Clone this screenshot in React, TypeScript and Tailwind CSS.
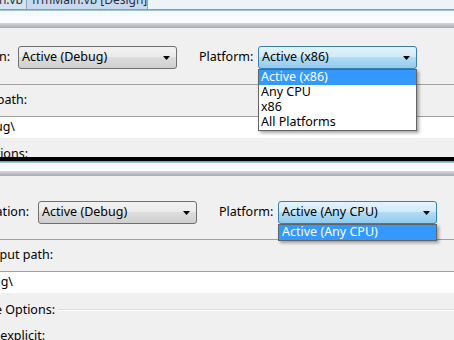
import React from "react";

function Arrow() {
  return (
    <svg width="7" height="4" viewBox="0 0 7 4" className="shrink-0">
      <path d="M0 0 H7 L3.5 4 Z" fill="#000" />
    </svg>
  );
}

function Combo({ text, focused }: { text: string; focused?: boolean }) {
  return (
    <div
      className={
        "w-[159px] h-[23px] rounded-[3px] border flex items-center justify-between pl-[3px] pr-[6px] " +
        (focused
          ? "border-[#3c7fb1] bg-[linear-gradient(#e3f3fc_0%,#d2ecfa_45%,#b2dcf5_50%,#90cbee_100%)]"
          : "border-[#707070] bg-[linear-gradient(#f2f2f2_0%,#ebebeb_45%,#dddddd_50%,#cfcfcf_100%)]")
      }
    >
      <span className="whitespace-nowrap leading-none">{text}</span>
      <Arrow />
    </div>
  );
}

function Label({ text, w }: { text: string; w: number }) {
  return (
    <div
      className="flex justify-end overflow-hidden whitespace-nowrap shrink-0"
      style={{ width: w }}
    >
      <span>{text}</span>
    </div>
  );
}

function HeaderBands({ top }: { top?: boolean }) {
  return (
    <div className="flex flex-col shrink-0">
      <div className="h-[1px] bg-[#7f9db9]" />
      <div className="h-[1px] bg-[#9fc3d0]" />
      <div className={(top ? "h-[12px]" : "h-[8px]") + " bg-[linear-gradient(#f4f8fb,#fbfcfd)]"} />
      <div className="h-[5px] bg-[linear-gradient(#d8d8de,#a9a9b2)]" />
    </div>
  );
}

export default function App() {
  return (
    <div className="w-[454px] h-[340px] overflow-hidden bg-[#f0f0f0] flex flex-col text-[12.5px] text-black font-['Noto_Sans',sans-serif]">
      {/* ---------- TOP SCREENSHOT ---------- */}
      <div className="h-[157px] flex flex-col shrink-0">
        {/* tab strip */}
        <div className="h-[9px] flex bg-[#eef3f8] overflow-hidden shrink-0 text-[12px]">
          <div className="w-[27px] bg-[#d6e2ef] border-r border-[#8ea6c0] flex justify-end overflow-hidden">
            <span className="-mt-[9px] pr-[3px] text-[#1e2f45] whitespace-nowrap">frmMain.vb</span>
          </div>
          <div className="w-[121px] bg-[#c9d9ec] border-r border-[#8ea6c0] overflow-hidden pl-[5px]">
            <span className="block -mt-[9px] text-[#1e2f45] whitespace-nowrap">frmMain.vb [Design]</span>
          </div>
        </div>
        <HeaderBands top />
        {/* panel */}
        <div className="flex-1 flex flex-col">
          <div className="h-[56px] pt-[18px] flex items-start shrink-0">
            <div className="h-[23px] flex items-center">
              <Label text="Configuration:" w={10} />
            </div>
            <div className="ml-[8px]">
              <Combo text="Active (Debug)" />
            </div>
            <div className="ml-[22px] w-[59px] h-[23px] flex items-center">Platform:</div>
            <div className="relative">
              <Combo text="Active (x86)" focused />
              <div className="absolute left-0 top-[23px] w-[159px] bg-white border border-[#646464] shadow-[2px_2px_3px_rgba(0,0,0,0.35)] flex flex-col z-10">
                <div className="h-[15px] bg-[#3399ff] text-white pl-[2px] flex items-center leading-none">Active (x86)</div>
                <div className="h-[15px] pl-[2px] flex items-center leading-none">Any CPU</div>
                <div className="h-[15px] pl-[2px] flex items-center leading-none">x86</div>
                <div className="h-[15px] pl-[2px] flex items-center leading-none">All Platforms</div>
              </div>
            </div>
          </div>
          <div className="h-[1px] bg-[#a0a0a0] shrink-0" />
          <div className="h-[31px] flex items-center shrink-0">
            <Label text="Build output path:" w={27} />
          </div>
          <div className="h-[1px] bg-[#a0a0a0] shrink-0" />
          <div className="h-[21px] bg-white flex items-center shrink-0">
            <Label text="bin\Debug\" w={15} />
          </div>
          <div className="flex-1 flex items-end overflow-hidden">
            <div className="-mb-[7px]">
              <Label text="Compile Options:" w={28} />
            </div>
          </div>
        </div>
      </div>

      {/* black divider */}
      <div className="h-[4px] bg-black shrink-0" />

      {/* ---------- BOTTOM SCREENSHOT ---------- */}
      <div className="flex-1 flex flex-col">
        <HeaderBands />
        <div className="h-[63px] pt-[25px] flex items-start shrink-0">
          <div className="h-[23px] flex items-center">
            <Label text="Configuration:" w={29} />
          </div>
          <div className="ml-[9px]">
            <Combo text="Active (Debug)" />
          </div>
          <div className="ml-[22px] w-[59px] h-[23px] flex items-center">Platform:</div>
          <div className="relative">
            <Combo text="Active (Any CPU)" focused />
            <div className="absolute left-0 top-[23px] w-[159px] bg-white border border-[#646464] shadow-[2px_2px_3px_rgba(0,0,0,0.35)] flex flex-col z-10">
              <div className="h-[15px] bg-[#3399ff] text-white pl-[3px] flex items-center leading-none">Active (Any CPU)</div>
            </div>
          </div>
        </div>
        <div className="h-[1px] bg-[#a0a0a0] shrink-0" />
        <div className="h-[31px] flex items-center shrink-0">
          <Label text="Build output path:" w={53} />
        </div>
        <div className="h-[1px] bg-[#a0a0a0] shrink-0" />
        <div className="h-[21px] bg-white flex items-center shrink-0">
          <Label text="bin\Debug\" w={13} />
        </div>
        <div className="h-[34px] flex items-center shrink-0">
          <Label text="Compile Options:" w={55} />
          <div className="flex-1 ml-[3px] flex flex-col">
            <div className="h-[1px] bg-[#d5dfe5]" />
            <div className="h-[1px] bg-white" />
          </div>
        </div>
        <div className="h-[14px] flex items-start shrink-0">
          <Label text="Option explicit:" w={45} />
        </div>
      </div>
    </div>
  );
}
